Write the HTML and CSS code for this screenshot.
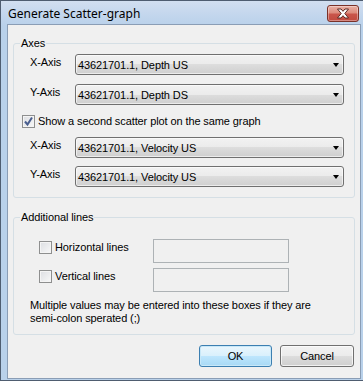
FILE: index.html
```html
<!DOCTYPE html>
<html>
<head>
<meta charset="utf-8">
<link rel="stylesheet" href="styles.css">
</head>
<body>
<div class="window">
  <div class="titlebar">
    <span class="title">Generate Scatter-graph</span>
    <div class="close">
      <svg width="14" height="11" viewBox="0 0 14 11"><path d="M1.5 1 L5 1 L7 3.3 L9 1 L12.5 1 L8.8 5.5 L12.5 10 L9 10 L7 7.7 L5 10 L1.5 10 L5.2 5.5 Z" fill="#fff" stroke="#5a2a24" stroke-width="1" stroke-linejoin="round"/></svg>
    </div>
  </div>
  <div class="client">
    <fieldset class="group axes">
      <legend>Axes</legend>
      <div class="row r1"><span class="lbl">X-Axis</span><div class="combo"><span>43621701.1, Depth US</span><i class="arrow"></i></div></div>
      <div class="row r2"><span class="lbl">Y-Axis</span><div class="combo"><span>43621701.1, Depth DS</span><i class="arrow"></i></div></div>
      <div class="check-row"><span class="cb checked"><svg width="11" height="11" viewBox="0 0 11 11"><path d="M2 5.5 L4.5 8.5 L9 1.5" fill="none" stroke="#4a5f8f" stroke-width="2"/></svg></span><span>Show a second scatter plot on the same graph</span></div>
      <div class="row r3"><span class="lbl">X-Axis</span><div class="combo"><span>43621701.1, Velocity US</span><i class="arrow"></i></div></div>
      <div class="row r4"><span class="lbl">Y-Axis</span><div class="combo"><span>43621701.1, Velocity US</span><i class="arrow"></i></div></div>
    </fieldset>
    <fieldset class="group lines">
      <legend>Additional lines</legend>
      <div class="line-row l1"><div class="cbl"><span class="cb"></span><span>Horizontal lines</span></div><div class="textbox"></div></div>
      <div class="line-row l2"><div class="cbl"><span class="cb"></span><span>Vertical lines</span></div><div class="textbox"></div></div>
      <p class="note">Multiple values may be entered into these boxes if they are<br>semi-colon sperated (;)</p>
    </fieldset>
    <div class="buttons">
      <div class="btn default">OK</div>
      <div class="btn cancel">Cancel</div>
    </div>
  </div>
</div>
</body>
</html>
```
FILE: styles.css
```css
* { box-sizing: border-box; }
html, body { margin: 0; padding: 0; }
body {
  width: 363px;
  height: 381px;
  overflow: hidden;
  font-family: "Liberation Sans", Arial, sans-serif;
  font-size: 11px;
  letter-spacing: -0.1px;
  color: #000;
}
.window {
  width: 363px;
  height: 381px;
  border: 1px solid #4f5d70;
  border-right: none;
  background: linear-gradient(#d2dff0 0px, #c3d6ed 14px, #b9d1ea 25px, #b9d1ea 100%);
  padding: 0 2px 1px 6px;
  display: flex;
  flex-direction: column;
}
.titlebar {
  height: 23px;
  display: flex;
  align-items: center;
  justify-content: space-between;
  padding-left: 1px;
}
.title {
  font-family: "Noto Sans", "Open Sans", sans-serif;
  font-size: 12px;
  letter-spacing: 0;
  color: #000;
  margin-top: 2px;
}
.close {
  width: 32px;
  height: 17px;
  margin-right: 2px;
  margin-top: 2px;
  border: 1px solid #7a3128;
  border-radius: 3px;
  background: linear-gradient(#e9b0a4 0%, #dd8c7d 45%, #c9554a 55%, #c14a3e 100%);
  display: flex;
  align-items: center;
  justify-content: center;
  box-shadow: inset 0 0 0 1px rgba(255,255,255,0.35);
}
.client {
  flex: 1;
  background: #f0f0f0;
  border: 1px solid #8a9db5;
  display: flex;
  flex-direction: column;
}
.group {
  margin: 0 5px;
  padding: 0;
  border: 1px solid #d5dfe5;
  border-radius: 3px;
  min-width: 0;
}
.group legend {
  margin-left: 6px;
  padding: 0 1px;
  line-height: 13px;
  height: 13px;
}
.axes { margin-top: 12px; padding-bottom: 10px; }
.row {
  display: flex;
  align-items: flex-start;
  height: 21px;
  padding-left: 16px;
}
.r1 { margin-top: 4px; }
.r2 { margin-top: 9px; }
.r3 { margin-top: 9px; }
.r4 { margin-top: 8px; }
.lbl {
  width: 45px;
  padding-top: 2px;
  line-height: 13px;
}
.combo {
  width: 269px;
  height: 21px;
  border: 1px solid #707070;
  border-radius: 3px;
  background: linear-gradient(#f2f2f2 0%, #ebebeb 50%, #dddddd 50%, #cfcfcf 100%);
  display: flex;
  align-items: center;
  justify-content: space-between;
  padding: 0 4px 0 2px;
  box-shadow: inset 0 0 0 1px rgba(255,255,255,0.6);
}
.arrow {
  width: 0;
  height: 0;
  border-left: 3.5px solid transparent;
  border-right: 3.5px solid transparent;
  border-top: 4px solid #000;
}
.check-row {
  display: flex;
  align-items: center;
  height: 13px;
  margin-top: 10px;
  padding-left: 8px;
  line-height: 13px;
}
.cb {
  width: 13px;
  height: 13px;
  border: 1px solid #8e8f8f;
  background: linear-gradient(135deg, #dcdee2, #f8f8f8);
  box-shadow: inset 0 0 0 1px #f4f4f4;
  margin-right: 3px;
  flex: none;
  display: flex;
  align-items: center;
  justify-content: center;
}
.cb.checked svg { display: block; }
.lines { margin-top: 13px; padding-bottom: 9px; }
.line-row {
  display: flex;
  align-items: flex-start;
  padding-left: 25px;
}
.l1 { margin-top: 15px; }
.l2 { margin-top: 5px; }
.cbl {
  display: flex;
  align-items: center;
  width: 114px;
  margin-top: 2px;
  line-height: 13px;
}
.textbox {
  width: 136px;
  height: 24px;
  border: 1px solid #adb2b5;
  background: #f0f0f0;
}
.note {
  margin: 7px 0 0 16px;
  line-height: 13px;
}
.buttons {
  display: flex;
  justify-content: flex-end;
  gap: 8px;
  margin: 10px 6px 0 0;
}
.btn {
  width: 73px;
  height: 22px;
  border: 1px solid #707070;
  border-radius: 3px;
  display: flex;
  align-items: center;
  justify-content: center;
  background: linear-gradient(#f2f2f2 0%, #ebebeb 50%, #dddddd 50%, #cfcfcf 100%);
  box-shadow: inset 0 0 0 1px rgba(255,255,255,0.7);
}
.btn.cancel { width: 74px; }
.btn.default {
  border-color: #3c7fb1;
  background: linear-gradient(#eaf6fd 0%, #d9f0fc 50%, #bee6fd 50%, #a7d9f5 100%);
  box-shadow: inset 0 0 0 1px #c8e8f8;
}
```
